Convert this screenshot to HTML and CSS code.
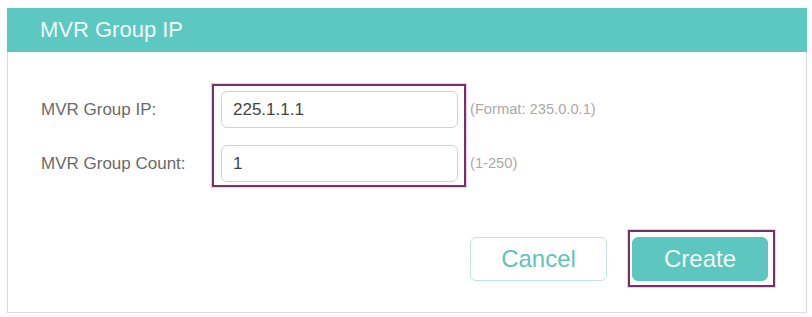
FILE: index.html
```html
<!DOCTYPE html>
<html>
<head>
<meta charset="utf-8">
<link rel="stylesheet" href="styles.css">
</head>
<body>
<div class="panel">
  <div class="panel-head">MVR Group IP</div>
  <div class="panel-body">
    <div class="form">
      <div class="labels">
        <div class="label">MVR Group IP:</div>
        <div class="label">MVR Group Count:</div>
      </div>
      <div class="mark mark-fields">
        <div class="input">225.1.1.1</div>
        <div class="input">1</div>
      </div>
      <div class="hints">
        <div class="hint">(Format: 235.0.0.1)</div>
        <div class="hint">(1-250)</div>
      </div>
    </div>
    <div class="actions">
      <button class="btn btn-cancel">Cancel</button>
      <div class="mark mark-btn">
        <button class="btn btn-create">Create</button>
      </div>
    </div>
  </div>
</div>
</body>
</html>
```

FILE: styles.css
```css
* { box-sizing: border-box; }
body {
  margin: 0;
  background: #fff;
  font-family: "Liberation Sans", Arial, sans-serif;
}
.panel {
  margin: 8px 0 0 7px;
  width: 800px;
  height: 305px;
  border: 1px solid #dcdcdc;
  border-top: none;
  display: flex;
  flex-direction: column;
  box-shadow: 0 1px 2px rgba(0,0,0,0.06);
}
.panel-head {
  height: 44px;
  background: #5dc8c2;
  color: #eefaf8;
  font-size: 22px;
  line-height: 44px;
  padding-left: 33px;
  margin: 0 -1px;
}
.panel-body {
  flex: 1;
  display: flex;
  flex-direction: column;
  padding-top: 32px;
}
.form {
  display: flex;
  align-items: flex-start;
  padding-left: 33px;
}
.labels, .hints {
  display: flex;
  flex-direction: column;
  gap: 17px;
  padding-top: 7px;
}
.labels { width: 171px; }
.label {
  height: 37px;
  line-height: 37px;
  font-size: 17px;
  color: #6a6a6a;
}
.hints { padding-left: 4px; }
.hint {
  height: 37px;
  line-height: 37px;
  font-size: 14.7px;
  color: #aaa;
}
.mark {
  border: 2px solid #7a2f68;
  box-shadow: 0 0 0 1px rgba(235,160,205,0.55);
}
.mark-fields {
  display: flex;
  flex-direction: column;
  gap: 17px;
  padding: 5px 6px 3px 7px;
}
.input {
  width: 237px;
  height: 37px;
  border: 1px solid #cbd6d2;
  border-radius: 6px;
  padding-left: 11px;
  font-size: 17px;
  line-height: 35px;
  color: #444;
}
.actions {
  display: flex;
  justify-content: flex-end;
  align-items: center;
  gap: 21px;
  margin-top: 43px;
  padding-right: 31px;
}
.btn {
  width: 137px;
  height: 44px;
  border-radius: 6px;
  font-family: "Liberation Sans", Arial, sans-serif;
  font-size: 24px;
  padding: 0;
  cursor: pointer;
}
.btn-cancel {
  background: #fff;
  border: 1px solid #c4e2de;
  color: #62c3bb;
}
.mark-btn {
  padding: 5px 5px 4px 2px;
}
.btn-create {
  width: 136px;
  background: #5cc6bf;
  border: 1px solid #5cc6bf;
  color: #eefaf8;
}
```
